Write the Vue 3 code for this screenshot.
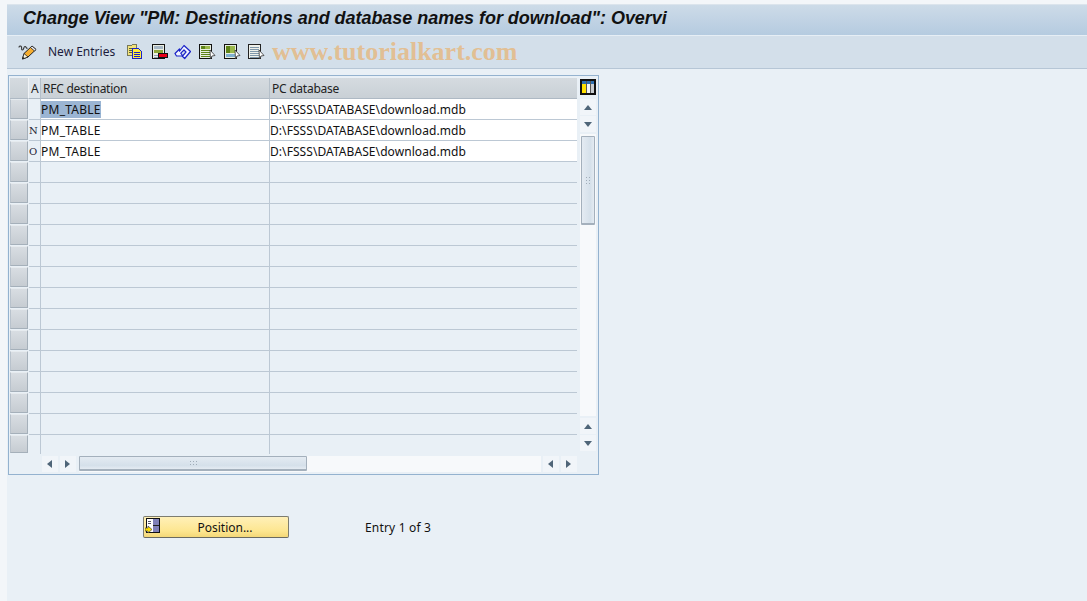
<script setup>
const rows = [
  { mark: '', rfc: 'PM_TABLE', db: 'D:\\FSSS\\DATABASE\\download.mdb', sel: true },
  { mark: 'N', rfc: 'PM_TABLE', db: 'D:\\FSSS\\DATABASE\\download.mdb' },
  { mark: 'O', rfc: 'PM_TABLE', db: 'D:\\FSSS\\DATABASE\\download.mdb' },
  ...Array.from({ length: 14 }, () => ({ mark: '', rfc: '', db: '', empty: true })),
]
</script>

<template>
  <div class="screen">
    <div class="main">
      <header class="title">Change View "PM: Destinations and database names for download": Overvi</header>
      <div class="toolbar">
        <svg class="ic" width="20" height="18" viewBox="0 0 20 18">
          <path d="M1 4.500c0-2 2-2 2.500-.5s-.5 3 1 3 1-3.500 2.500-3.500 1 2.500 2.500 1.500" fill="none" stroke="#333" stroke-width="1.100"/>
          <path d="M4.500 16l1.500-5.500 8-7.500 4 3.500-8 7.500z" fill="#f6ad2e" stroke="#222" stroke-width="1"/>
          <path d="M14 3l4 3.500-1.500 1.500-4-3.500z" fill="#e8e8f0" stroke="#222" stroke-width=".8"/>
          <path d="M6 10.500l4 3.500-5.500 2z" fill="#fff6d8" stroke="#222" stroke-width=".8"/>
          <path d="M4.500 16l.5-2 1.500 1.300z" fill="#111"/>
        </svg>
        <span class="new">New Entries</span>
        <svg class="ic copy" width="16" height="16" viewBox="0 0 16 16" shape-rendering="crispEdges">
          <path d="M.5 1.500h4l1-1h4v11h-9z" fill="#f2e27a" stroke="#77785a"/>
          <path d="M2 4h5M2 6h3M2 8h3" stroke="#55603a"/>
          <path d="M5.500 4.500h6l3 3v7h-9z" fill="#ffec3c" stroke="#1a22c8"/>
          <path d="M7 8h6M7 10h6M7 12h6" stroke="#1a22c8"/>
        </svg>
        <svg class="ic del" width="16" height="16" viewBox="0 0 16 16" shape-rendering="crispEdges">
          <rect x=".5" y=".5" width="12" height="14" fill="#eaeee2" stroke="#111"/>
          <rect x="2" y="2" width="9" height="3" fill="#a7b8c6"/>
          <rect x="2" y="6" width="9" height="3" fill="#8ea83a"/>
          <path d="M2 11h5M2 13h5" stroke="#90a4b8"/>
          <rect x="6.500" y="9.500" width="9" height="4" fill="#e80018" stroke="#111"/>
        </svg>
        <svg class="ic undo" width="17" height="16" viewBox="0 0 17 16">
          <path d="M1 9.500l4.500-4.500v2.200l4.500-5.700 6.500 6-5.800 7-2.400-2.200 3.700-4.300-2-2-3.200 3.200 2 2.800H2.500z" fill="#f2f5ff" stroke="#1a22c8" stroke-width="1.200" stroke-linejoin="round"/>
        </svg>
        <svg class="ic nx1" width="17" height="16" viewBox="0 0 17 16" shape-rendering="crispEdges">
          <rect x=".5" y=".5" width="12" height="14" fill="#e8eee0" stroke="#111"/>
          <rect x="2" y="2" width="9" height="3" fill="#5f8418"/>
          <rect x="6" y="2" width="5" height="3" fill="#9ab84a"/>
          <path d="M2 6.500h9M2 8.500h9M2 10.500h9M2 12.500h9" stroke="#5f8418"/>
          <path d="M11 6l5 5.500-3 .5-1.500 3z" fill="#fff" stroke="#333" stroke-width=".8" shape-rendering="auto"/>
        </svg>
        <svg class="ic nx2" width="17" height="16" viewBox="0 0 17 16" shape-rendering="crispEdges">
          <rect x=".5" y=".5" width="12" height="14" fill="#e8eee0" stroke="#111"/>
          <rect x="2" y="2" width="9" height="7" fill="#5f8418"/>
          <rect x="6" y="2" width="5" height="7" fill="#9ab84a"/>
          <rect x="2" y="10" width="9" height="3" fill="#7fb0d0"/>
          <path d="M11 6l5 5.500-3 .5-1.500 3z" fill="#fff" stroke="#333" stroke-width=".8" shape-rendering="auto"/>
        </svg>
        <svg class="ic nx3" width="17" height="16" viewBox="0 0 17 16" shape-rendering="crispEdges">
          <rect x=".5" y=".5" width="12" height="14" fill="#eef0ea" stroke="#222"/>
          <path d="M2 3h9M2 5h9M2 7h9M2 9h9M2 11h9M2 13h9" stroke="#7f97aa"/>
          <path d="M11 6l5 5.500-3 .5-1.500 3z" fill="#fff" stroke="#333" stroke-width=".8" shape-rendering="auto"/>
        </svg>
        <span class="watermark">www.tutorialkart.com</span>
      </div>

      <div class="content">
        <section class="frame">
          <div class="table-area">
            <div class="grid">
              <div class="head corner"></div>
              <div class="head h-a">A</div>
              <div class="head h-rfc">RFC destination</div>
              <div class="head h-db">PC database</div>
              <template v-for="(r, i) in rows" :key="i">
                <div class="selector"><i></i></div>
                <div class="cell mark">{{ r.mark }}</div>
                <div class="cell rfc" :class="{ filled: !r.empty }"><span :class="{ sel: r.sel }">{{ r.rfc }}</span></div>
                <div class="cell db" :class="{ filled: !r.empty }">{{ r.db }}</div>
              </template>
            </div>
            <div class="vscroll">
              <svg class="cfg" width="16" height="16" viewBox="0 0 16 16" shape-rendering="crispEdges">
                <rect x="1" y="1" width="14" height="14" fill="#fff" stroke="#111" stroke-width="2"/>
                <rect x="2" y="2" width="12" height="3" fill="#2e6fb0"/>
                <rect x="2" y="5" width="4" height="9" fill="#ffe000"/>
                <rect x="7" y="5" width="3" height="9" fill="#f4f4f4"/>
                <rect x="11" y="5" width="3" height="9" fill="#c8ccd0"/>
                <path d="M6.500 2v12M10.500 2v12" stroke="#555"/>
              </svg>
              <div class="vtrack">
                <div class="btn"><b class="tri up"></b></div>
                <div class="btn"><b class="tri down"></b></div>
                <div class="vwell">
                  <div class="vthumb"><span class="grip g-v"></span></div>
                </div>
                <div class="btn"><b class="tri up"></b></div>
                <div class="btn"><b class="tri down"></b></div>
              </div>
            </div>
          </div>
          <div class="hscroll">
            <div class="btn"><b class="tri left"></b></div>
            <div class="btn"><b class="tri right"></b></div>
            <div class="hwell">
              <div class="hthumb"><span class="grip g-h"></span></div>
            </div>
            <div class="btn"><b class="tri left"></b></div>
            <div class="btn"><b class="tri right"></b></div>
          </div>
        </section>

        <div class="actions">
          <button class="position">
            <svg class="pos-ic" width="15" height="16" viewBox="0 0 15 16" shape-rendering="crispEdges">
              <rect x="1.500" y=".5" width="13" height="14" fill="#fff" stroke="#111"/>
              <rect x="8" y="1" width="6" height="13" fill="#8080b8"/>
              <path d="M8 7.500h6" stroke="#222"/>
              <path d="M3 3.500h3M3 5.500h3" stroke="#556" />
              <path d="M0 10h3V8l4 3.500-4 3.500v-2H0z" fill="#ffe000" stroke="#444" stroke-width=".7" shape-rendering="auto"/>
            </svg>
            <span>Position...</span>
          </button>
          <span class="entry">Entry 1 of 3</span>
        </div>
      </div>
    </div>
  </div>
</template>

<style>
html, body { margin: 0; background: #f3f6f9; }
</style>

<style scoped>
.screen {
  width: 1087px;
  height: 601px;
  overflow: hidden;
  font-family: "Noto Sans", "Liberation Sans", sans-serif;
  font-size: 12px;
  color: #111;
  padding: 4px 0 0 7px;
  box-sizing: border-box;
  background: #f3f6f9;
}
.main { height: 597px; display: flex; flex-direction: column; background: #e9f0f6; }
.title {
  height: 32px;
  box-sizing: border-box;
  padding: 2px 0 0 16px;
  font: italic bold 18px "Liberation Sans", sans-serif;
  letter-spacing: -.04px;
  line-height: 22px;
  color: #111;
  white-space: nowrap;
  overflow: hidden;
  background: linear-gradient(#cddbe8, #b5cbe0);
  border-top: 1px solid #dbe4ec;
  border-bottom: 1px solid #e6eef5;
}
.toolbar {
  height: 33px;
  box-sizing: border-box;
  position: relative;
  display: flex;
  align-items: center;
  padding: 0 0 1px 11px;
  background: #d3dfea;
  border-bottom: 1px solid #b6c6d6;
}
.ic { flex: none; }
.new { margin-left: 10px; width: 67px; color: #1c1c3c; white-space: nowrap; }
.copy { margin-left: 12px; }
.del { margin-left: 9px; }
.undo { margin-left: 6px; }
.nx1 { margin-left: 8px; }
.nx2 { margin-left: 8px; }
.nx3 { margin-left: 7px; }
.watermark {
  position: absolute;
  left: 265px;
  top: 2px;
  font: bold 26px "Liberation Serif", serif;
  line-height: 28px;
  color: rgba(236, 170, 90, .62);
  white-space: nowrap;
}
.content { flex: 1; padding: 6px 0 0 1px; }
.frame {
  width: 591px;
  height: 400px;
  box-sizing: border-box;
  border: 1px solid #94b2cf;
  padding: 2px 1px 0 1px;
  display: flex;
  flex-direction: column;
}
.table-area { display: flex; height: 377px; }
.grid {
  width: 567px;
  display: grid;
  grid-template-columns: 19px 12px 229px 307px;
  grid-template-rows: 21px repeat(16, 21px) 19px;
}
.head {
  background: linear-gradient(#d5dbe0, #c9d0d6);
  border-bottom: 1px solid #aeb9c4;
  border-right: 1px solid #b4bfc9;
  box-sizing: border-box;
  line-height: 21px;
  padding-left: 2px;
  white-space: nowrap;
  letter-spacing: -.25px;
  color: #222;
}
.corner { border-right: 1px solid #f0f3f6; }
.h-a { background: #dfe6ec; padding-left: 2px; }
.h-db { border-right: 0; }
.selector {
  box-sizing: border-box;
  padding-bottom: 1px;
}
.selector i {
  display: block;
  height: 100%;
  width: 18px;
  box-sizing: border-box;
  background: linear-gradient(#d8dde2, #c6ccd2);
  border: 1px solid #a5b0ba;
  border-top-color: #e6ebef;
  border-left-color: #b8c2cc;
}
.cell {
  box-sizing: border-box;
  border-bottom: 1px solid #bcc8d4;
  border-right: 1px solid #bcc8d4;
  line-height: 21px;
  white-space: nowrap;
  overflow: hidden;
}
.cell:nth-last-child(-n+3) { border-bottom: 0; }
.mark { font: 10px/21px "DejaVu Serif", serif; color: #223; }
.rfc { letter-spacing: .25px; }
.db { border-right: 0; letter-spacing: .07px; }
.filled { background: #fff; }
.sel { background: #9bb5d3; }
.vscroll { width: 20px; margin-left: 1px; display: flex; flex-direction: column; align-items: center; }
.cfg { flex: none; margin: 1px 0 4px; }
.vtrack { display: flex; flex-direction: column; align-items: center; gap: 1px; height: 352px; }
.btn {
  width: 16px;
  height: 16px;
  flex: none;
  background: #f1f5f9;
  display: flex;
  align-items: center;
  justify-content: center;
}
.vwell { flex: 1; width: 16px; background: #f7f9fb; padding: 2px 0 0 1px; margin: 1px 0; box-sizing: border-box; }
.vthumb {
  width: 14px;
  height: 89px;
  box-sizing: border-box;
  border: 1px solid #a4b0bc;
  border-bottom-width: 2px;
  border-radius: 1px;
  background: linear-gradient(90deg, #e4ebf2, #d5e0ea 70%, #e4ebf2);
  display: flex;
  align-items: center;
  justify-content: center;
}
.grip {
  display: block;
  background-image: radial-gradient(#a0acb8 .8px, transparent 1px);
  background-size: 3px 3px;
}
.g-v { width: 6px; height: 9px; }
.g-h { width: 9px; height: 6px; }
.tri { width: 0; height: 0; display: block; border-style: solid; border-color: transparent; }
.up { border-width: 0 4.500px 5px; border-bottom-color: #4f6578; }
.down { border-width: 5px 4.500px 0; border-top-color: #4f6578; }
.left { border-width: 4.500px 5px 4.500px 0; border-right-color: #4f6578; margin-right: 2px; }
.right { border-width: 4.500px 0 4.500px 5px; border-left-color: #4f6578; margin-right: 2px; }
.hscroll {
  height: 17px;
  display: flex;
  align-items: center;
  gap: 2px;
  padding-left: 32px;
}
.hwell { width: 462px; height: 16px; background: #f7f9fb; margin-left: 1px; }
.hthumb {
  width: 228px;
  height: 15px;
  box-sizing: border-box;
  border: 1px solid #a4b0bc;
  border-bottom-width: 2px;
  border-radius: 1px;
  background: linear-gradient(#e4ebf2, #d5e0ea 70%, #e4ebf2);
  display: flex;
  align-items: center;
  justify-content: center;
}
.actions {
  display: flex;
  align-items: center;
  margin-top: 41px;
  padding-left: 135px;
}
.position {
  position: relative;
  width: 146px;
  height: 22px;
  padding: 0;
  box-sizing: border-box;
  border: 1px solid #7d7d70;
  border-bottom-color: #6a6a60;
  border-radius: 2px;
  background: linear-gradient(#fff0b8, #fde690 70%, #f4d878);
  font: inherit;
  color: #111;
  text-align: center;
}
.position span { position: relative; left: 9px; }
.pos-ic { position: absolute; left: 1px; top: 1px; }
.entry { margin-left: 76px; letter-spacing: .17px; }
</style>
